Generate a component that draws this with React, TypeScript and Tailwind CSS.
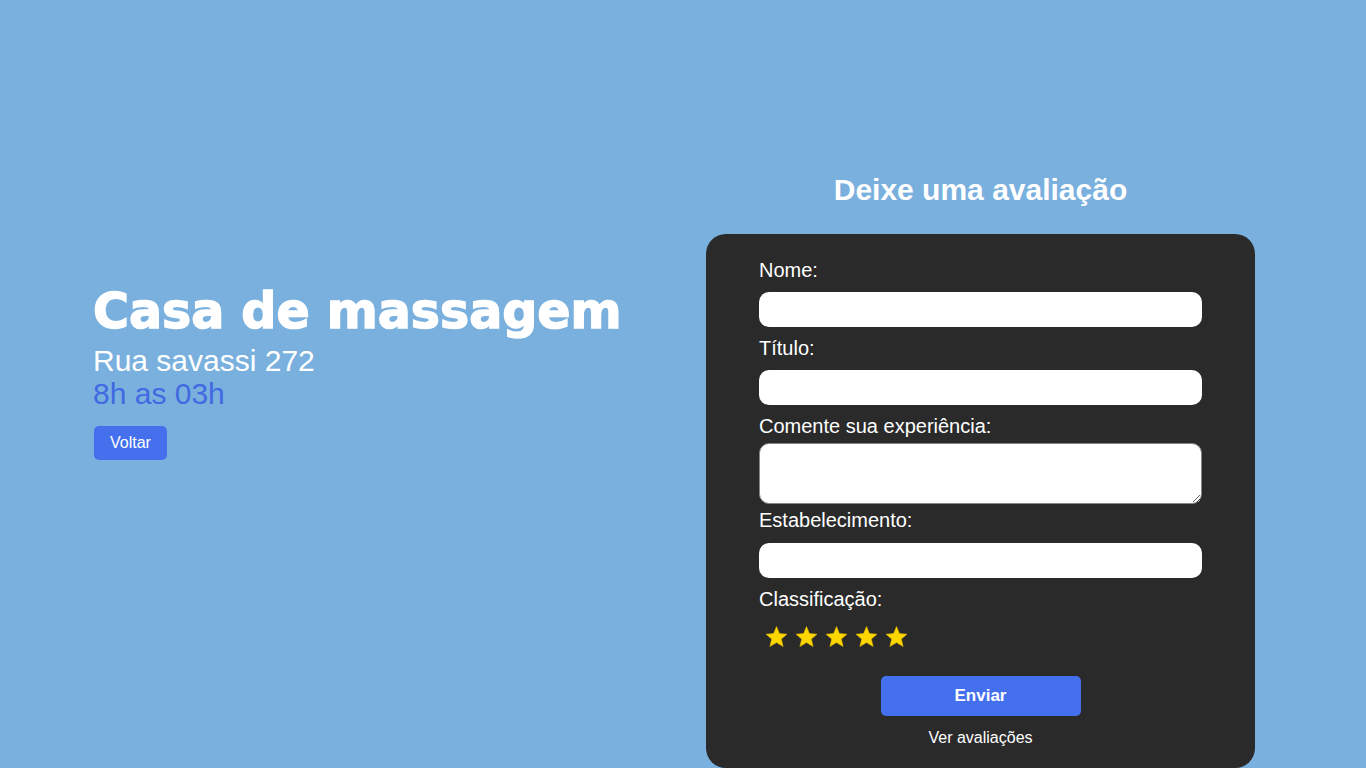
import { useLayoutEffect, useRef } from 'react';

const FIELDS_TOP = [
  { id: 'nome', label: 'Nome:' },
  { id: 'titulo', label: 'Título:' },
];

function Star() {
  return (
    <svg viewBox="0 0 24 24" className="w-[25px] h-[24px]">
      <polygon
        points="12,1.5 14.9,8.6 22.5,9.2 16.8,14 18.6,21.6 12,17.6 5.4,21.6 7.2,14 1.5,9.2 9.1,8.6"
        fill="#ffd700"
        stroke="#e0b800"
        strokeWidth="0.6"
      />
    </svg>
  );
}

export default function App() {
  const scroller = useRef<HTMLDivElement>(null);

  useLayoutEffect(() => {
    if (scroller.current) scroller.current.scrollTop = scroller.current.scrollHeight;
  }, []);

  return (
    <div
      ref={scroller}
      className="h-screen overflow-y-scroll bg-[#79b0de] font-['Liberation_Sans',Arial,sans-serif] text-white"
    >
      <div className="flex pt-[80px]">
        {/* info do estabelecimento */}
        <div className="flex-1 pl-[93px] pt-[280px]">
          <h1 className="font-['DejaVu_Sans',sans-serif] font-bold text-[49px] leading-[64px] [-webkit-text-stroke:1.5px_#fff]">
            Casa de massagem
          </h1>
          <p className="text-[30px] leading-[33px]">Rua savassi 272</p>
          <p className="text-[30px] leading-[33px] text-[#4169e1]">8h as 03h</p>
          <button className="mt-[16px] ml-[1px] px-4 py-[8px] rounded-[5px] bg-[#4470ee] text-white text-[16px] leading-[18px]">
            Voltar
          </button>
        </div>

        {/* formulário */}
        <div className="w-[549px] mr-[111px] pt-[173px]">
          <h2 className="text-center font-bold text-[30px] leading-[34px] mb-[27px]">
            Deixe uma avaliação
          </h2>
          <form className="bg-[#2a2a2a] rounded-[20px] px-[53px] pt-[25px] pb-[21px]">
            {FIELDS_TOP.map((f) => (
              <div key={f.id} className="mb-[10px]">
                <label htmlFor={f.id} className="block text-[20px] leading-[23px]">
                  {f.label}
                </label>
                <input id={f.id} className="block mt-[10px] w-full h-[35px] rounded-[10px] bg-white text-black px-2" />
              </div>
            ))}

            <label htmlFor="comentario" className="block text-[20px] leading-[23px]">
              Comente sua experiência:
            </label>
            <textarea
              id="comentario"
              className="block mt-[5px] w-full h-[61px] rounded-[10px] bg-white border border-[#858585] text-black px-2"
            />

            <label htmlFor="estab" className="block mt-[5px] text-[20px] leading-[23px]">
              Estabelecimento:
            </label>
            <input id="estab" className="block mt-[11px] w-full h-[35px] rounded-[10px] bg-white text-black px-2" />

            <label className="block mt-[10px] text-[20px] leading-[23px]">Classificação:</label>
            <div className="flex gap-[5px] ml-[5px] mt-[14px]">
              {[1, 2, 3, 4, 5].map((n) => (
                <Star key={n} />
              ))}
            </div>

            <button
              type="button"
              className="block mx-auto mt-[27px] w-[200px] h-[40px] rounded-[5px] bg-[#4470ee] text-white font-bold text-[17px]"
            >
              Enviar
            </button>
            <p className="mt-[12px] text-center text-[16px] leading-[19px]">Ver avaliações</p>
          </form>
        </div>
      </div>
    </div>
  );
}
